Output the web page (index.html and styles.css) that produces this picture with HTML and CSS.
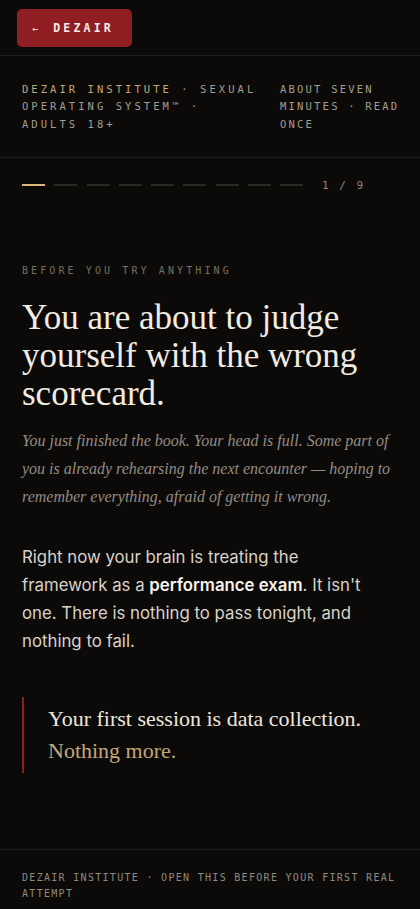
FILE: index.html
```html
<!DOCTYPE html>
<html lang="en">
<head>
<meta charset="utf-8">
<title>Dezair</title>
<link rel="stylesheet" href="styles.css">
</head>
<body>
<div class="page">
  <div class="topbar">
    <a class="back" href="#"><span class="arrow">←</span>DEZAIR</a>
  </div>
  <header class="meta">
    <div class="meta-left"><span class="gold">DEZAIR INSTITUTE</span> · SEXUAL OPERATING SYSTEM™ · ADULTS 18+</div>
    <div class="meta-right">ABOUT SEVEN MINUTES · READ ONCE</div>
  </header>
  <div class="progress">
    <div class="bars">
      <span class="bar on"></span><span class="bar"></span><span class="bar"></span><span class="bar"></span><span class="bar"></span><span class="bar"></span><span class="bar"></span><span class="bar"></span><span class="bar"></span>
    </div>
    <span class="count">1 / 9</span>
  </div>
  <main class="content">
    <p class="eyebrow">BEFORE YOU TRY ANYTHING</p>
    <h1 class="title">You are about to judge yourself with the wrong scorecard.</h1>
    <p class="lede">You just finished the book. Your head is full. Some part of you is already rehearsing the next encounter — hoping to remember everything, afraid of getting it wrong.</p>
    <p class="body">Right now your brain is treating the framework as a <strong>performance exam</strong>. It isn't one. There is nothing to pass tonight, and nothing to fail.</p>
    <blockquote class="quote">Your first session is data collection. <span class="gold-q">Nothing more.</span></blockquote>
  </main>
  <footer class="foot">DEZAIR INSTITUTE · OPEN THIS BEFORE YOUR FIRST REAL ATTEMPT</footer>
</div>
</body>
</html>
```
FILE: styles.css
```css
html, body {
  margin: 0;
  padding: 0;
  background: #0c0a09;
}
body {
  font-family: "Inter", "Liberation Sans", sans-serif;
  color: #e8e2d8;
}
.page {
  width: 420px;
  min-height: 909px;
  display: flex;
  flex-direction: column;
}
.topbar {
  height: 56px;
  padding: 9px 17px 0;
  box-sizing: border-box;
  border-bottom: 1px solid #1f1c19;
}
.back {
  display: inline-flex;
  align-items: center;
  height: 38px;
  width: 115px;
  box-sizing: border-box;
  padding: 0 0 0 15px;
  background: #8f1d22;
  border-radius: 5px;
  color: #f3ece6;
  text-decoration: none;
  font-family: "DejaVu Sans Mono", monospace;
  font-weight: bold;
  font-size: 11.5px;
  letter-spacing: 3.2px;
}
.arrow {
  font-weight: normal;
  font-size: 10px;
  margin-right: 12px;
}
.meta {
  display: grid;
  grid-template-columns: 236px 130px;
  column-gap: 22px;
  padding: 25px 0 24px 22px;
  border-bottom: 1px solid #1f1c19;
  font-family: "DejaVu Sans Mono", monospace;
  font-size: 10.5px;
  line-height: 17.3px;
  color: #a39d93;
}
.meta-left { letter-spacing: 3.05px; }
.meta-right { letter-spacing: 2.2px; }
.gold { color: #c3a679; }
.progress {
  display: flex;
  align-items: center;
  padding: 19px 22px 0;
  height: 17px;
}
.bars {
  display: flex;
  gap: 9.25px;
}
.bar {
  width: 23px;
  height: 2px;
  background: #2a2823;
}
.bar.on { background: #d8b679; }
.count {
  margin-left: 19px;
  font-family: "DejaVu Sans Mono", monospace;
  font-size: 11px;
  letter-spacing: 2px;
  color: #8b857c;
}
.content {
  padding: 70px 22px 0;
  flex: 1;
}
.eyebrow {
  margin: 0;
  font-family: "DejaVu Sans Mono", monospace;
  font-size: 10px;
  letter-spacing: 3.1px;
  color: #75705f;
  line-height: 14px;
}
.title {
  margin: 21px 0 0;
  font-family: "Liberation Serif", serif;
  font-weight: normal;
  font-size: 35px;
  line-height: 38px;
  color: #f1ece2;
}
.lede {
  margin: 14px 0 0;
  font-family: "Liberation Serif", serif;
  font-style: italic;
  font-size: 16px;
  line-height: 28px;
  color: #928c83;
}
.body {
  margin: 32px 0 0;
  max-width: 364px;
  font-size: 16.8px;
  line-height: 28px;
  color: #d9d3c9;
}
.body strong {
  color: #f7f2ea;
  font-weight: 600;
}
.quote {
  margin: 42px 0 0;
  padding: 6px 0 6px 24px;
  border-left: 2px solid #8f1d22;
  font-family: "Liberation Serif", serif;
  font-size: 22px;
  line-height: 32px;
  color: #ece6dc;
}
.gold-q { color: #c3a679; }
.foot {
  margin-top: auto;
  border-top: 1px solid #1f1c19;
  padding: 20px 22px 7px;
  font-family: "DejaVu Sans Mono", monospace;
  font-size: 10px;
  line-height: 16px;
  letter-spacing: 1.3px;
  color: #8f897f;
}
```
